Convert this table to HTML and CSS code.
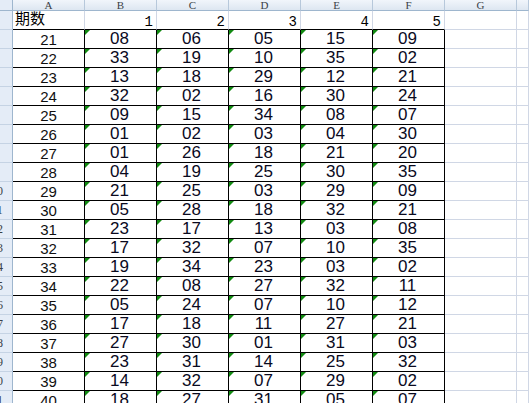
FILE: index.html
```html
<!DOCTYPE html>
<html lang="zh">
<head>
<meta charset="utf-8">
<title>期数</title>
<link rel="stylesheet" href="styles.css">
</head>
<body>
<div class="sheet">
  <div class="corner"></div>
  <div class="ch">A</div><div class="ch">B</div><div class="ch">C</div><div class="ch">D</div><div class="ch">E</div><div class="ch">F</div><div class="ch">G</div><div class="ch"></div>

  <div class="rh"><span>1</span></div><div class="c top cn">期数</div><div class="c top num">1</div><div class="c top num">2</div><div class="c top num">3</div><div class="c top num">4</div><div class="c top num">5</div><div class="c"></div><div class="c"></div>

  <div class="rh"><span>2</span></div><div class="c b a">21</div><div class="c b d">08</div><div class="c b d">06</div><div class="c b d">05</div><div class="c b d">15</div><div class="c b d">09</div><div class="c"></div><div class="c"></div>
  <div class="rh"><span>3</span></div><div class="c b a">22</div><div class="c b d">33</div><div class="c b d">19</div><div class="c b d">10</div><div class="c b d">35</div><div class="c b d">02</div><div class="c"></div><div class="c"></div>
  <div class="rh"><span>4</span></div><div class="c b a">23</div><div class="c b d">13</div><div class="c b d">18</div><div class="c b d">29</div><div class="c b d">12</div><div class="c b d">21</div><div class="c"></div><div class="c"></div>
  <div class="rh"><span>5</span></div><div class="c b a">24</div><div class="c b d">32</div><div class="c b d">02</div><div class="c b d">16</div><div class="c b d">30</div><div class="c b d">24</div><div class="c"></div><div class="c"></div>
  <div class="rh"><span>6</span></div><div class="c b a">25</div><div class="c b d">09</div><div class="c b d">15</div><div class="c b d">34</div><div class="c b d">08</div><div class="c b d">07</div><div class="c"></div><div class="c"></div>
  <div class="rh"><span>7</span></div><div class="c b a">26</div><div class="c b d">01</div><div class="c b d">02</div><div class="c b d">03</div><div class="c b d">04</div><div class="c b d">30</div><div class="c"></div><div class="c"></div>
  <div class="rh"><span>8</span></div><div class="c b a">27</div><div class="c b d">01</div><div class="c b d">26</div><div class="c b d">18</div><div class="c b d">21</div><div class="c b d">20</div><div class="c"></div><div class="c"></div>
  <div class="rh"><span>9</span></div><div class="c b a">28</div><div class="c b d">04</div><div class="c b d">19</div><div class="c b d">25</div><div class="c b d">30</div><div class="c b d">35</div><div class="c"></div><div class="c"></div>
  <div class="rh"><span>10</span></div><div class="c b a">29</div><div class="c b d">21</div><div class="c b d">25</div><div class="c b d">03</div><div class="c b d">29</div><div class="c b d">09</div><div class="c"></div><div class="c"></div>
  <div class="rh"><span>11</span></div><div class="c b a">30</div><div class="c b d">05</div><div class="c b d">28</div><div class="c b d">18</div><div class="c b d">32</div><div class="c b d">21</div><div class="c"></div><div class="c"></div>
  <div class="rh"><span>12</span></div><div class="c b a">31</div><div class="c b d">23</div><div class="c b d">17</div><div class="c b d">13</div><div class="c b d">03</div><div class="c b d">08</div><div class="c"></div><div class="c"></div>
  <div class="rh"><span>13</span></div><div class="c b a">32</div><div class="c b d">17</div><div class="c b d">32</div><div class="c b d">07</div><div class="c b d">10</div><div class="c b d">35</div><div class="c"></div><div class="c"></div>
  <div class="rh"><span>14</span></div><div class="c b a">33</div><div class="c b d">19</div><div class="c b d">34</div><div class="c b d">23</div><div class="c b d">03</div><div class="c b d">02</div><div class="c"></div><div class="c"></div>
  <div class="rh"><span>15</span></div><div class="c b a">34</div><div class="c b d">22</div><div class="c b d">08</div><div class="c b d">27</div><div class="c b d">32</div><div class="c b d">11</div><div class="c"></div><div class="c"></div>
  <div class="rh"><span>16</span></div><div class="c b a">35</div><div class="c b d">05</div><div class="c b d">24</div><div class="c b d">07</div><div class="c b d">10</div><div class="c b d">12</div><div class="c"></div><div class="c"></div>
  <div class="rh"><span>17</span></div><div class="c b a">36</div><div class="c b d">17</div><div class="c b d">18</div><div class="c b d">11</div><div class="c b d">27</div><div class="c b d">21</div><div class="c"></div><div class="c"></div>
  <div class="rh"><span>18</span></div><div class="c b a">37</div><div class="c b d">27</div><div class="c b d">30</div><div class="c b d">01</div><div class="c b d">31</div><div class="c b d">03</div><div class="c"></div><div class="c"></div>
  <div class="rh"><span>19</span></div><div class="c b a">38</div><div class="c b d">23</div><div class="c b d">31</div><div class="c b d">14</div><div class="c b d">25</div><div class="c b d">32</div><div class="c"></div><div class="c"></div>
  <div class="rh"><span>20</span></div><div class="c b a">39</div><div class="c b d">14</div><div class="c b d">32</div><div class="c b d">07</div><div class="c b d">29</div><div class="c b d">02</div><div class="c"></div><div class="c"></div>
  <div class="rh"><span>21</span></div><div class="c b a">40</div><div class="c b d">18</div><div class="c b d">27</div><div class="c b d">31</div><div class="c b d">05</div><div class="c b d">07</div><div class="c"></div><div class="c"></div>
</div>
</body>
</html>
```

FILE: styles.css
```css
html, body {
  margin: 0;
  padding: 0;
  background: #ffffff;
  overflow: hidden;
}

.sheet {
  display: grid;
  grid-template-columns: 13px repeat(7, 72px) 1fr;
  grid-template-rows: 11px;
  grid-auto-rows: 19px;
  width: 529px;
  height: 403px;
  overflow: hidden;
}

.sheet > div {
  box-sizing: border-box;
  overflow: hidden;
  white-space: nowrap;
}

.corner {
  background: #e4ecf7;
  border-right: 1px solid #9eb6ce;
  border-bottom: 1px solid #9eb6ce;
}

.sheet > .ch {
  overflow: visible;
}

.ch {
  background: linear-gradient(#f1f5fb, #dde6f1);
  border-right: 1px solid #b7c8db;
  border-bottom: 1px solid #9eb6ce;
  text-align: center;
  font-family: "Liberation Serif", serif;
  font-size: 11px;
  line-height: 10px;
  color: #3a3f47;
}

.rh {
  background: #e4ecf7;
  border-right: 1px solid #9eb6ce;
  border-bottom: 1px solid #c5d3e4;
  font-family: "Liberation Serif", serif;
  font-size: 12px;
  line-height: 17px;
  padding-top: 1px;
  color: #3a3f47;
}

.rh span {
  display: block;
  width: 32px;
  margin-left: -19px;
  text-align: center;
}

.c {
  position: relative;
  background: #ffffff;
  border-right: 1px solid #d0d7e5;
  border-bottom: 1px solid #d0d7e5;
  color: #000000;
}

.top {
  border-bottom-color: #000000;
}

.cn {
  font-family: "Noto Sans CJK SC", sans-serif;
  font-size: 15px;
  line-height: 13px;
  padding-left: 2px;
}

.num {
  font-family: "Liberation Mono", monospace;
  font-size: 14px;
  line-height: 16px;
  padding-top: 3px;
  padding-right: 3px;
  text-align: right;
}

.b {
  border-right-color: #000000;
  border-bottom-color: #000000;
}

.a {
  font-family: "Liberation Sans", sans-serif;
  font-size: 15px;
  line-height: 20px;
  text-align: center;
  color: #111111;
}

.d {
  font-family: "Liberation Sans", sans-serif;
  font-size: 17px;
  line-height: 18px;
  text-align: center;
  padding-right: 2px;
  color: #0a0a1e;
}

.d::before {
  content: "";
  position: absolute;
  top: 0;
  left: 0;
  width: 0;
  height: 0;
  border-top: 5px solid #118a11;
  border-right: 5px solid transparent;
}
```
